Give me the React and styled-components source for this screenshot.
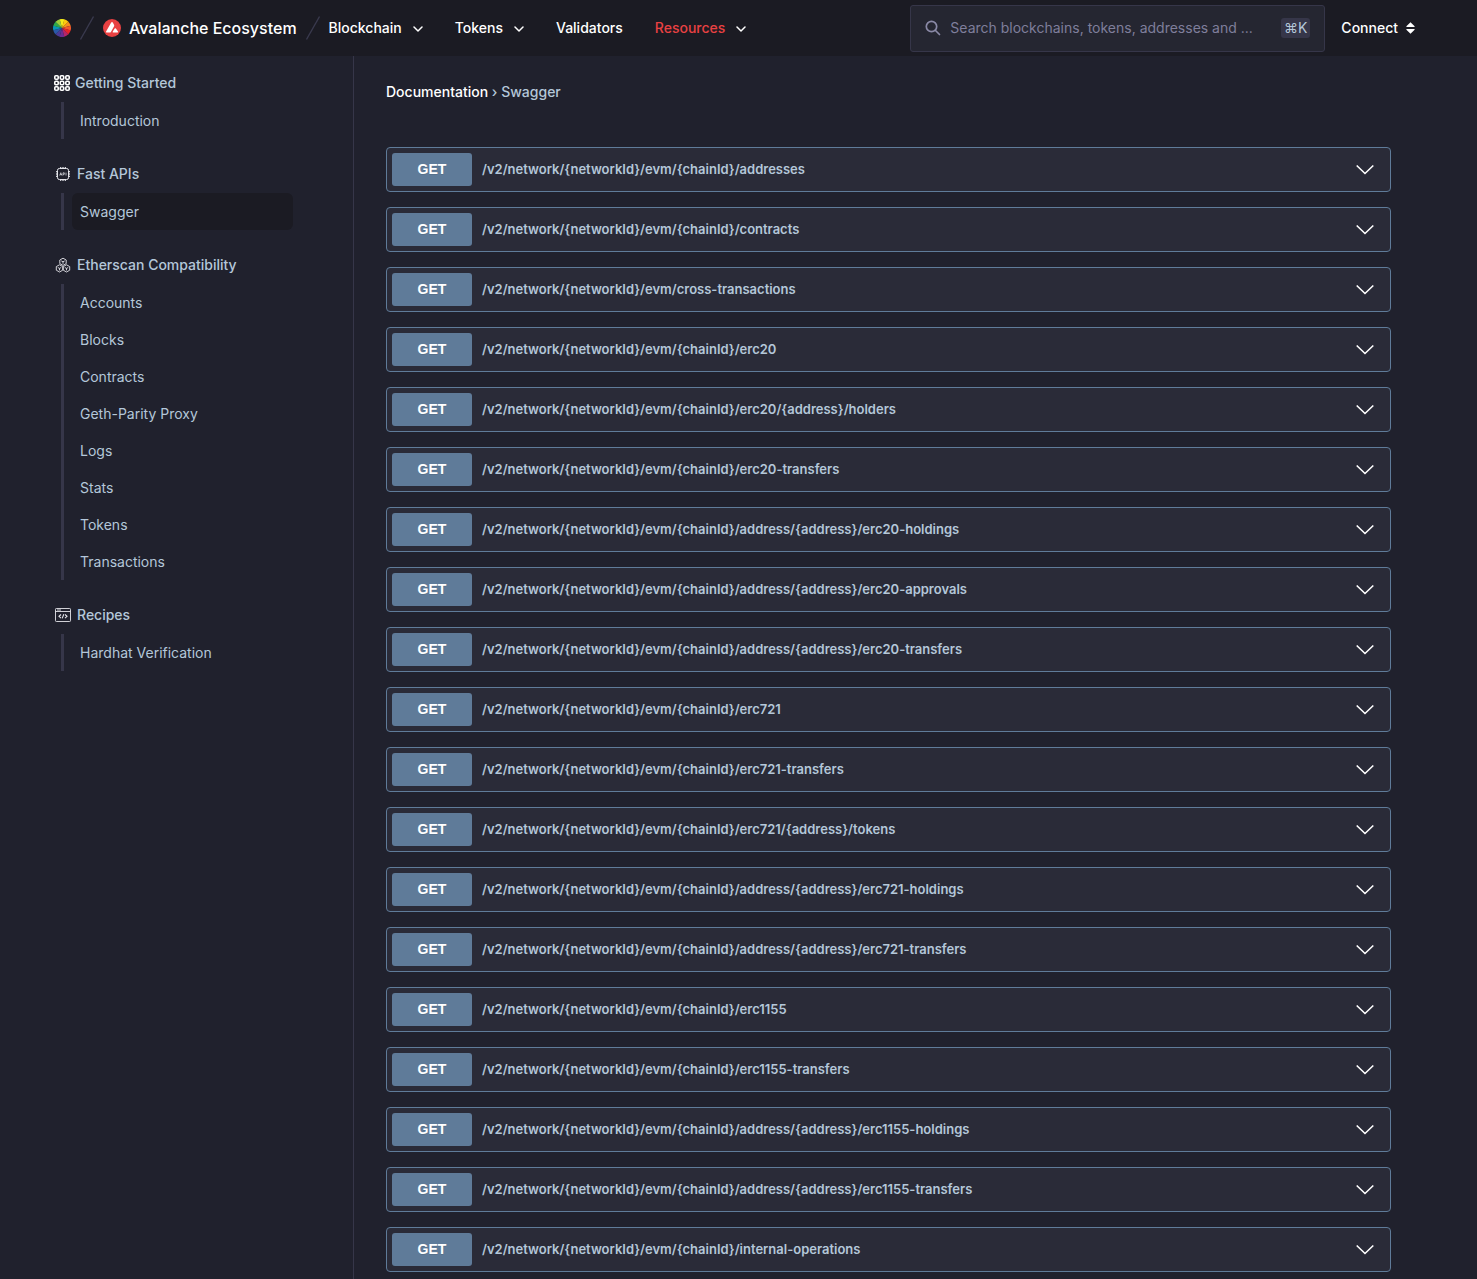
import React from "react";
import styled, { createGlobalStyle } from "styled-components";

const Fondo = "#20212d";
const FondoHeader = "#1b1b23";
const FondoFila = "#2a2b38";
const Linea = "#363649";
const Texto = "#b4c7d9";
const Azul = "#5f7b99";
const Rojo = "#e84142";

const Colores = [
  "#f3ec19",
  "#fdc70f",
  "#f58e1e",
  "#f1592a",
  "#e6242a",
  "#b72467",
  "#6c2d91",
  "#4a3a97",
  "#2a58a8",
  "#0a93b5",
  "#2fa84a",
  "#9bcb3b",
];

const Menus = [
  { Nombre: "Blockchain", Flecha: true },
  { Nombre: "Tokens", Flecha: true },
  { Nombre: "Validators" },
  { Nombre: "Resources", Flecha: true, Activo: true },
];

const Rutas = [
  "/v2/network/{networkId}/evm/{chainId}/addresses",
  "/v2/network/{networkId}/evm/{chainId}/contracts",
  "/v2/network/{networkId}/evm/cross-transactions",
  "/v2/network/{networkId}/evm/{chainId}/erc20",
  "/v2/network/{networkId}/evm/{chainId}/erc20/{address}/holders",
  "/v2/network/{networkId}/evm/{chainId}/erc20-transfers",
  "/v2/network/{networkId}/evm/{chainId}/address/{address}/erc20-holdings",
  "/v2/network/{networkId}/evm/{chainId}/address/{address}/erc20-approvals",
  "/v2/network/{networkId}/evm/{chainId}/address/{address}/erc20-transfers",
  "/v2/network/{networkId}/evm/{chainId}/erc721",
  "/v2/network/{networkId}/evm/{chainId}/erc721-transfers",
  "/v2/network/{networkId}/evm/{chainId}/erc721/{address}/tokens",
  "/v2/network/{networkId}/evm/{chainId}/address/{address}/erc721-holdings",
  "/v2/network/{networkId}/evm/{chainId}/address/{address}/erc721-transfers",
  "/v2/network/{networkId}/evm/{chainId}/erc1155",
  "/v2/network/{networkId}/evm/{chainId}/erc1155-transfers",
  "/v2/network/{networkId}/evm/{chainId}/address/{address}/erc1155-holdings",
  "/v2/network/{networkId}/evm/{chainId}/address/{address}/erc1155-transfers",
  "/v2/network/{networkId}/evm/{chainId}/internal-operations",
];

// Iconos

const Rueda = () => (
  <svg width="18" height="18" viewBox="-9 -9 18 18">
    {Colores.map((color, i) => {
      const a = ((i * 30 - 105) * Math.PI) / 180;
      const b = ((i * 30 - 74) * Math.PI) / 180;
      return (
        <path
          key={color}
          fill={color}
          d={`M0 0L${9 * Math.cos(a)} ${9 * Math.sin(a)}A9 9 0 0 1 ${
            9 * Math.cos(b)
          } ${9 * Math.sin(b)}Z`}
        />
      );
    })}
  </svg>
);

const Barra = () => (
  <svg width="14" height="24" viewBox="0 0 14 24">
    <path d="M0.5 23.5L13.5 0.5" stroke="#3a3a4e" strokeWidth="1.3" />
  </svg>
);

const Avalanche = () => (
  <svg width="18" height="18" viewBox="0 0 18 18">
    <circle cx="9" cy="9" r="9" fill={Rojo} />
    <path
      fill="#fff"
      d="M8.2 3.6Q9 2.4 9.8 3.6L11.1 6Q11.4 6.7 11.1 7.3L7.9 12.9Q7.5 13.6 6.8 13.6H3.7Q2.5 13.6 3.1 12.5ZM11.7 9.6Q12.3 8.7 12.9 9.6L15 12.6Q15.5 13.6 14.5 13.6H10.3Q9.2 13.6 9.8 12.6Z"
    />
  </svg>
);

const Flecha = () => (
  <svg width="10" height="8" viewBox="0 0 10 8">
    <path
      d="M1 3L5 7L9 3"
      fill="none"
      stroke="#fff"
      strokeWidth="1.5"
      strokeLinecap="round"
      strokeLinejoin="round"
    />
  </svg>
);

const Lupa = () => (
  <svg width="16" height="16" viewBox="0 0 16 16">
    <g fill="none" stroke="#8a89a6" strokeWidth="1.7" strokeLinecap="round">
      <circle cx="6.5" cy="6.5" r="5.2" />
      <path d="M10.5 10.5L14.5 14.5" />
    </g>
  </svg>
);

const Orden = () => (
  <svg width="9" height="12" viewBox="0 0 9 12">
    <path
      fill="#fff"
      d="M4.5 0.3L8.6 4.2Q9 5 8.2 5H0.8Q0 5 0.4 4.2ZM4.5 11.7L8.6 7.8Q9 7 8.2 7H0.8Q0 7 0.4 7.8Z"
    />
  </svg>
);

const Desplegar = () => (
  <svg width="18" height="11" viewBox="0 0 18 11">
    <path d="M0.7 1.5L9 9.5L17.3 1.5" fill="none" stroke="#fff" strokeWidth="1.6" />
  </svg>
);

const Cuadricula = () => (
  <svg width="16" height="16" viewBox="0 0 16 16">
    <g fill="none" stroke="#fff" strokeWidth="1.6">
      {[2.5, 8, 13.5].map((y) =>
        [2.5, 8, 13.5].map((x) => (
          <rect key={`${x}-${y}`} x={x - 1.7} y={y - 1.7} width="3.4" height="3.4" rx="1" />
        ))
      )}
    </g>
  </svg>
);

const Chip = () => (
  <svg width="18" height="16" viewBox="-1 0 18 16">
    <g fill="none" stroke="#e4e4ea">
      <rect x="2.5" y="2.5" width="11" height="11" rx="1.8" />
      <path
        strokeWidth="0.9"
        d="M5.5 1V2.5M7.2 1V2.5M8.8 1V2.5M10.5 1V2.5M5.5 13.5V15M7.2 13.5V15M8.8 13.5V15M10.5 13.5V15M1 5.5H2.5M1 7.2H2.5M1 8.8H2.5M1 10.5H2.5M13.5 5.5H15M13.5 7.2H15M13.5 8.8H15M13.5 10.5H15"
      />
      <path strokeWidth="0.7" d="M4.7 9.5L5.8 6.7L6.9 9.5M5.1 8.6H6.5M8 9.5V6.8H9.3V8.3H8M11 6.6V9.5" />
    </g>
  </svg>
);

const Cubos = () => (
  <svg width="18" height="16" viewBox="-1 0 18 16">
    <g fill="none" stroke="#e4e4ea" strokeWidth="0.9" strokeLinejoin="round">
      {[
        [8, 4.8],
        [4.5, 11.4],
        [11.5, 11.4],
      ].map(([x, y]) => (
        <path
          key={x}
          d={`M${x} ${y - 3.6}L${x + 3.2} ${y - 1.8}V${y + 1.8}L${x} ${y + 3.6}L${
            x - 3.2
          } ${y + 1.8}V${y - 1.8}ZM${x - 1.7} ${y - 0.9}L${x} ${y}L${x + 1.7} ${
            y - 0.9
          }M${x} ${y}V${y + 2}`}
        />
      ))}
    </g>
  </svg>
);

const Codigo = () => (
  <svg width="18" height="14" viewBox="-1 0 18 14">
    <g fill="none" stroke="#e4e4ea" strokeWidth="0.9">
      <rect x="0.5" y="0.5" width="15" height="13" rx="0.8" />
      <path d="M0.5 3.5H15.5M2 2H6" />
      <path strokeWidth="1.1" d="M6 6.5L4 8.3L6 10.1M10 6.5L12 8.3L10 10.1M8.8 6.2L7.2 10.4" />
    </g>
  </svg>
);

const Secciones = [
  { Titulo: "Getting Started", Icono: Cuadricula, Enlaces: ["Introduction"] },
  { Titulo: "Fast APIs", Icono: Chip, Enlaces: ["Swagger"] },
  {
    Titulo: "Etherscan Compatibility",
    Icono: Cubos,
    Enlaces: [
      "Accounts",
      "Blocks",
      "Contracts",
      "Geth-Parity Proxy",
      "Logs",
      "Stats",
      "Tokens",
      "Transactions",
    ],
  },
  { Titulo: "Recipes", Icono: Codigo, Enlaces: ["Hardhat Verification"] },
];

const App = () => {
  return (
    <>
      <Global />
      <Header>
        <Inicio href="#" aria-label="Home">
          <Rueda />
        </Inicio>
        <Barra />
        <Marca href="#">
          <Avalanche />
          Avalanche Ecosystem
        </Marca>
        <Barra />
        <Nav>
          {Menus.map((m) => (
            <BotonMenu key={m.Nombre} type="button" $activo={m.Activo}>
              {m.Nombre}
              {m.Flecha && <Flecha />}
            </BotonMenu>
          ))}
        </Nav>
        <Buscador>
          <Lupa />
          <Input
            type="text"
            aria-label="Search"
            placeholder="Search blockchains, tokens, addresses and ..."
          />
          <Tecla>⌘K</Tecla>
        </Buscador>
        <Conectar type="button">
          Connect
          <Orden />
        </Conectar>
      </Header>

      <Pagina>
        <Lateral>
          {Secciones.map(({ Titulo, Icono, Enlaces }) => (
            <section key={Titulo}>
              <TituloSeccion>
                <Icono />
                {Titulo}
              </TituloSeccion>
              <Lista>
                {Enlaces.map((e) => (
                  <li key={e}>
                    <Enlace href="#" $activo={e === "Swagger"}>
                      {e}
                    </Enlace>
                  </li>
                ))}
              </Lista>
            </section>
          ))}
        </Lateral>

        <Contenido>
          <Migas>
            <Miga href="#">Documentation</Miga> › <span>Swagger</span>
          </Migas>
          <Operaciones>
            {Rutas.map((r) => (
              <Operacion key={r} type="button">
                <Metodo>GET</Metodo>
                <Ruta>{r}</Ruta>
                <Desplegar />
              </Operacion>
            ))}
          </Operaciones>
        </Contenido>
      </Pagina>
    </>
  );
};

export default App;

const Global = createGlobalStyle`
  * {
    box-sizing: border-box;
  }

  body {
    margin: 0;
    background: ${Fondo};
    color: ${Texto};
    font-family: Inter, "Liberation Sans", sans-serif;
    font-size: 14px;
    line-height: 20px;
  }

  button, input {
    font: inherit;
    color: inherit;
    background: none;
    border: none;
    padding: 0;
  }

  button {
    cursor: pointer;
  }

  a {
    color: inherit;
    text-decoration: none;
  }

  svg {
    flex-shrink: 0;
  }
`;

// Cabecera

const Header = styled.header`
  display: flex;
  align-items: center;
  height: 56px;
  padding: 0 62px 0 53px;
  gap: 9px;
  background: ${FondoHeader};
  color: #fff;
`;

const Inicio = styled.a`
  display: flex;
`;

const Marca = styled.a`
  display: flex;
  align-items: center;
  gap: 8px;
  font-size: 16px;
  font-weight: 500;
  white-space: nowrap;
`;

const Nav = styled.nav`
  display: flex;
  gap: 32px;
`;

const BotonMenu = styled.button`
  display: flex;
  align-items: center;
  gap: 11px;
  font-weight: 500;
  color: ${(props) => (props.$activo ? Rojo : "#fff")};
`;

const Buscador = styled.div`
  display: flex;
  align-items: center;
  flex: 0 1 415px;
  height: 47px;
  margin-left: auto;
  padding: 0 14px;
  gap: 9px;
  background: #252631;
  border: 1px solid ${Linea};
  border-radius: 3px;
`;

const Input = styled.input`
  flex: 1;
  min-width: 0;
  outline: none;

  &::placeholder {
    color: #7f7e9b;
    opacity: 1;
  }
`;

const Tecla = styled.kbd`
  padding: 0 3px;
  border-radius: 3px;
  background: ${Linea};
  color: ${Texto};
  font-family: inherit;
`;

const Conectar = styled.button`
  display: flex;
  align-items: center;
  gap: 8px;
  margin-left: 7px;
  font-weight: 500;
`;

// Menu lateral

const Pagina = styled.div`
  display: flex;
  min-height: calc(100vh - 56px);
`;

const Lateral = styled.aside`
  display: flex;
  flex-direction: column;
  flex: 0 0 354px;
  gap: 25px;
  padding: 17px 60px 24px 54px;
  border-right: 1px solid ${Linea};
`;

const TituloSeccion = styled.h2`
  display: flex;
  align-items: center;
  gap: 5px;
  height: 20px;
  margin: 0 0 9px;
  font-size: 14px;
  font-weight: 500;
`;

const Lista = styled.ul`
  list-style: none;
  margin: 0 0 0 7px;
  padding: 0 0 0 8px;
  border-left: 3px solid ${Linea};
`;

const Enlace = styled.a`
  display: block;
  height: 37px;
  padding: 0 8px;
  line-height: 37px;
  border-radius: 6px;
  background: ${(props) => (props.$activo ? FondoHeader : "transparent")};
`;

// Contenido

const Contenido = styled.main`
  flex: 1;
  min-width: 0;
  padding: 26px 86px 7px 32px;
`;

const Migas = styled.nav`
  font-weight: 500;
`;

const Miga = styled.a`
  color: #fff;
`;

const Operaciones = styled.div`
  display: flex;
  flex-direction: column;
  gap: 15px;
  margin-top: 45px;
`;

const Operacion = styled.button`
  display: flex;
  align-items: center;
  gap: 10px;
  padding: 5px 16px 5px 5px;
  background: ${FondoFila};
  border: 1px solid ${Azul};
  border-radius: 4px;
  text-align: left;
`;

const Metodo = styled.span`
  width: 80px;
  height: 33px;
  border-radius: 3px;
  background: ${Azul};
  color: #fff;
  font-family: "Liberation Sans", sans-serif;
  font-weight: 700;
  line-height: 33px;
  text-align: center;
  text-shadow: 0 1px 0 rgba(0, 0, 0, 0.1);
`;

const Ruta = styled.span`
  flex: 1;
  min-width: 0;
  padding-bottom: 2px;
  font-size: 13px;
  font-weight: 600;
  overflow-wrap: anywhere;
`;
